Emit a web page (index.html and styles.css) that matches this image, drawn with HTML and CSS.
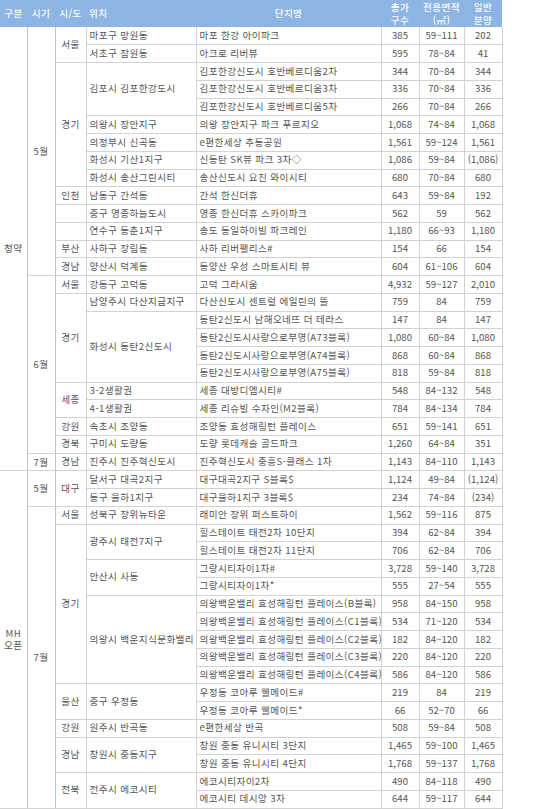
FILE: index.html
```html
<!DOCTYPE html>
<html lang="ko">
<head>
<meta charset="utf-8">
<title>분양 일정</title>
<link rel="stylesheet" href="styles.css">
</head>
<body>
<table class="sched">
<colgroup>
<col class="c-kind"><col class="c-when"><col class="c-prov"><col class="c-loc"><col class="c-name"><col class="c-tot"><col class="c-area"><col class="c-gen">
</colgroup>
<thead>
<tr>
<th>구분</th><th>시기</th><th>시/도</th><th class="left">위치</th><th>단지명</th><th>총가<br>구수</th><th>전용면적<br>(㎡)</th><th>일반<br>분양</th>
</tr>
</thead>
<tbody>
<tr><td rowspan="25" class="grp">청약</td><td rowspan="14" class="grp">5월</td><td rowspan="2">서울</td><td class="t">마포구 망원동</td><td class="t">마포 한강 아이파크</td><td>385</td><td>59~111</td><td>202</td></tr>
<tr><td class="t">서초구 잠원동</td><td class="t">아크로 리버뷰</td><td>595</td><td>78~84</td><td>41</td></tr>
<tr><td rowspan="7">경기</td><td rowspan="3" class="t">김포시 김포한강도시</td><td class="t">김포한강신도시 호반베르디움2차</td><td>344</td><td>70~84</td><td>344</td></tr>
<tr><td class="t">김포한강신도시 호반베르디움3차</td><td>336</td><td>70~84</td><td>336</td></tr>
<tr><td class="t">김포한강신도시 호반베르디움5차</td><td>266</td><td>70~84</td><td>266</td></tr>
<tr><td class="t">의왕시 장안지구</td><td class="t">의왕 장안지구 파크 푸르지오</td><td>1,068</td><td>74~84</td><td>1,068</td></tr>
<tr><td class="t">의정부시 신곡동</td><td class="t">e편한세상 추동공원</td><td>1,561</td><td>59~124</td><td>1,561</td></tr>
<tr><td class="t">화성시 기산1지구</td><td class="t">신동탄 SK뷰 파크 3차◇</td><td>1,086</td><td>59~84</td><td>(1,086)</td></tr>
<tr><td class="t">화성시 송산그린시티</td><td class="t">송산신도시 요진 와이시티</td><td>680</td><td>70~84</td><td>680</td></tr>
<tr><td>인천</td><td class="t">남동구 간석동</td><td class="t">간석 한신더휴</td><td>643</td><td>59~84</td><td>192</td></tr>
<tr><td></td><td class="t">중구 영종하늘도시</td><td class="t">영종 한신더휴 스카이파크</td><td>562</td><td>59</td><td>562</td></tr>
<tr><td></td><td class="t">연수구 동춘1지구</td><td class="t">송도 동일하이빌 파크레인</td><td>1,180</td><td>66~93</td><td>1,180</td></tr>
<tr><td>부산</td><td class="t">사하구 장림동</td><td class="t">사하 리버팰리스#</td><td>154</td><td>66</td><td>154</td></tr>
<tr><td>경남</td><td class="t">양산시 덕계동</td><td class="t">동양산 우성 스마트시티 뷰</td><td>604</td><td>61~106</td><td>604</td></tr>
<tr><td rowspan="10" class="grp">6월</td><td>서울</td><td class="t">강동구 고덕동</td><td class="t">고덕 그라시움</td><td>4,932</td><td>59~127</td><td>2,010</td></tr>
<tr><td rowspan="5">경기</td><td class="t">남양주시 다산지금지구</td><td class="t">다산신도시 센트럴 에일린의 뜰</td><td>759</td><td>84</td><td>759</td></tr>
<tr><td rowspan="4" class="t">화성시 동탄2신도시</td><td class="t">동탄2신도시 남해오네뜨 더 테라스</td><td>147</td><td>84</td><td>147</td></tr>
<tr><td class="t">동탄2신도시사랑으로부영(A73블록)</td><td>1,080</td><td>60~84</td><td>1,080</td></tr>
<tr><td class="t">동탄2신도시사랑으로부영(A74블록)</td><td>868</td><td>60~84</td><td>868</td></tr>
<tr><td class="t">동탄2신도시사랑으로부영(A75블록)</td><td>818</td><td>59~84</td><td>818</td></tr>
<tr><td rowspan="2">세종</td><td class="t">3-2생활권</td><td class="t">세종 대방디엠시티#</td><td>548</td><td>84~132</td><td>548</td></tr>
<tr><td class="t">4-1생활권</td><td class="t">세종 리슈빌 수자인(M2블록)</td><td>784</td><td>84~134</td><td>784</td></tr>
<tr><td>강원</td><td class="t">속초시 조양동</td><td class="t">조양동 효성해링턴 플레이스</td><td>651</td><td>59~141</td><td>651</td></tr>
<tr><td>경북</td><td class="t">구미시 도량동</td><td class="t">도량 롯데캐슬 골드파크</td><td>1,260</td><td>64~84</td><td>351</td></tr>
<tr><td class="grp">7월</td><td>경남</td><td class="t">진주시 진주혁신도시</td><td class="t">진주혁신도시 중흥S-클래스 1차</td><td>1,143</td><td>84~110</td><td>1,143</td></tr>
<tr class="sec"><td rowspan="19" class="grp">MH<br>오픈</td><td rowspan="2" class="grp">5월</td><td rowspan="2">대구</td><td class="t">달서구 대곡2지구</td><td class="t">대구대곡2지구 S블록$</td><td>1,124</td><td>49~84</td><td>(1,124)</td></tr>
<tr><td class="t">동구 율하1지구</td><td class="t">대구율하1지구 3블록$</td><td>234</td><td>74~84</td><td>(234)</td></tr>
<tr><td rowspan="17" class="grp">7월</td><td>서울</td><td class="t">성북구 장위뉴타운</td><td class="t">래미안 장위 퍼스트하이</td><td>1,562</td><td>59~116</td><td>875</td></tr>
<tr><td rowspan="9">경기</td><td rowspan="2" class="t">광주시 태전7지구</td><td class="t">힐스테이트 태전2차 10단지</td><td>394</td><td>62~84</td><td>394</td></tr>
<tr><td class="t">힐스테이트 태전2차 11단지</td><td>706</td><td>62~84</td><td>706</td></tr>
<tr><td rowspan="2" class="t">안산시 사동</td><td class="t">그랑시티자이1차#</td><td>3,728</td><td>59~140</td><td>3,728</td></tr>
<tr><td class="t">그랑시티자이1차*</td><td>555</td><td>27~54</td><td>555</td></tr>
<tr><td rowspan="5" class="t">의왕시 백운지식문화밸리</td><td class="t">의왕백운밸리 효성해링턴 플레이스(B블록)</td><td>958</td><td>84~150</td><td>958</td></tr>
<tr><td class="t">의왕백운밸리 효성해링턴 플레이스(C1블록)</td><td>534</td><td>71~120</td><td>534</td></tr>
<tr><td class="t">의왕백운밸리 효성해링턴 플레이스(C2블록)</td><td>182</td><td>84~120</td><td>182</td></tr>
<tr><td class="t">의왕백운밸리 효성해링턴 플레이스(C3블록)</td><td>220</td><td>84~120</td><td>220</td></tr>
<tr><td class="t">의왕백운밸리 효성해링턴 플레이스(C4블록)</td><td>586</td><td>84~120</td><td>586</td></tr>
<tr><td rowspan="2">울산</td><td rowspan="2" class="t">중구 우정동</td><td class="t">우정동 코아루 웰메이드#</td><td>219</td><td>84</td><td>219</td></tr>
<tr><td class="t">우정동 코아루 웰메이드*</td><td>66</td><td>52~70</td><td>66</td></tr>
<tr><td>강원</td><td class="t">원주시 반곡동</td><td class="t">e편한세상 반곡</td><td>508</td><td>59~84</td><td>508</td></tr>
<tr><td rowspan="2">경남</td><td rowspan="2" class="t">창원시 중동지구</td><td class="t">창원 중동 유니시티 3단지</td><td>1,465</td><td>59~100</td><td>1,465</td></tr>
<tr><td class="t">창원 중동 유니시티 4단지</td><td>1,768</td><td>59~137</td><td>1,768</td></tr>
<tr><td rowspan="2">전북</td><td rowspan="2" class="t">전주시 에코시티</td><td class="t">에코시티자이2차</td><td>490</td><td>84~118</td><td>490</td></tr>
<tr><td class="t">에코시티 데시앙 3차</td><td>644</td><td>59~117</td><td>644</td></tr>
</tbody>
</table>
</body>
</html>
```

FILE: styles.css
```css
html, body {
  margin: 0;
  padding: 0;
  background: #ffffff;
}

body {
  width: 540px;
  font-family: "Noto Sans CJK KR", "Noto Sans", "Liberation Sans", sans-serif;
  color: #555555;
}

.sched {
  width: 502px;
  table-layout: fixed;
  border-collapse: collapse;
  font-size: 9.6px;
  line-height: 1;
}

.c-kind { width: 27px; }
.c-when { width: 28px; }
.c-prov { width: 31px; }
.c-loc  { width: 110px; }
.c-name { width: 185px; }
.c-tot  { width: 38px; }
.c-area { width: 45px; }
.c-gen  { width: 38px; }

.sched th {
  background: #8db4e2;
  color: #ffffff;
  font-weight: 500;
  font-size: 9.6px;
  letter-spacing: 0.4px;
  height: 27px;
  padding: 0;
  text-align: center;
  vertical-align: middle;
  line-height: 12.5px;
  border: 0;
  white-space: nowrap;
}

.sched th.left {
  text-align: left;
  padding-left: 3px;
}

.sched tbody tr {
  height: 17.75px;
}

.sched td {
  border: 1px solid #d2d2d2;
  padding: 0;
  text-align: center;
  vertical-align: middle;
  white-space: nowrap;
  overflow: hidden;
}

.sched td:first-child {
  border-left: 0;
}

.sched td.t,
.sched td.grp,
.sched td:nth-last-child(n+5) {
  font-size: 9.6px;
  letter-spacing: 0.4px;
}

.sched td.t {
  text-align: left;
  padding-left: 3px;
}

.sched td.grp {
  border-right-color: #c4c4c4;
  line-height: 12.5px;
}

.sched tr:first-child td {
  border-top: 0;
}
```
